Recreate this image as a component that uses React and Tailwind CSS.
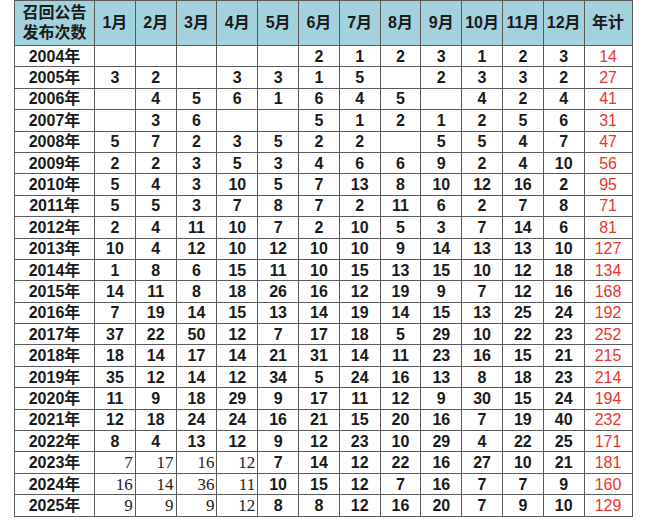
import React from 'react';

const MONTHS = ['1月', '2月', '3月', '4月', '5月', '6月', '7月', '8月', '9月', '10月', '11月', '12月'];

const ROWS = [
  ['2004年', ['', '', '', '', '', 2, 1, 2, 3, 1, 2, 3], 14],
  ['2005年', [3, 2, '', 3, 3, 1, 5, '', 2, 3, 3, 2], 27],
  ['2006年', ['', 4, 5, 6, 1, 6, 4, 5, '', 4, 2, 4], 41],
  ['2007年', ['', 3, 6, '', '', 5, 1, 2, 1, 2, 5, 6], 31],
  ['2008年', [5, 7, 2, 3, 5, 2, 2, '', 5, 5, 4, 7], 47],
  ['2009年', [2, 2, 3, 5, 3, 4, 6, 6, 9, 2, 4, 10], 56],
  ['2010年', [5, 4, 3, 10, 5, 7, 13, 8, 10, 12, 16, 2], 95],
  ['2011年', [5, 5, 3, 7, 8, 7, 2, 11, 6, 2, 7, 8], 71],
  ['2012年', [2, 4, 11, 10, 7, 2, 10, 5, 3, 7, 14, 6], 81],
  ['2013年', [10, 4, 12, 10, 12, 10, 10, 9, 14, 13, 13, 10], 127],
  ['2014年', [1, 8, 6, 15, 11, 10, 15, 13, 15, 10, 12, 18], 134],
  ['2015年', [14, 11, 8, 18, 26, 16, 12, 19, 9, 7, 12, 16], 168],
  ['2016年', [7, 19, 14, 15, 13, 14, 19, 14, 15, 13, 25, 24], 192],
  ['2017年', [37, 22, 50, 12, 7, 17, 18, 5, 29, 10, 22, 23], 252],
  ['2018年', [18, 14, 17, 14, 21, 31, 14, 11, 23, 16, 15, 21], 215],
  ['2019年', [35, 12, 14, 12, 34, 5, 24, 16, 13, 8, 18, 23], 214],
  ['2020年', [11, 9, 18, 29, 9, 17, 11, 12, 9, 30, 15, 24], 194],
  ['2021年', [12, 18, 24, 24, 16, 21, 15, 20, 16, 7, 19, 40], 232],
  ['2022年', [8, 4, 13, 12, 9, 12, 23, 10, 29, 4, 22, 25], 171],
  ['2023年', [7, 17, 16, 12, 7, 14, 12, 22, 16, 27, 10, 21], 181, true],
  ['2024年', [16, 14, 36, 11, 10, 15, 12, 7, 16, 7, 7, 9], 160, true],
  ['2025年', [9, 9, 9, 12, 8, 8, 12, 16, 20, 7, 9, 10], 129, true],
];

const sans = "font-['Liberation_Sans','Noto_Sans_CJK_SC',sans-serif]";

export default function App() {
  return (
    <div className="w-[650px] h-[532px] bg-white">
      <table className={`ml-[14px] table-fixed border-collapse w-[618px] text-[16px] font-bold text-[#1a1a1a] ${sans}`}>
        <colgroup>
          <col className="w-[80px]" />
          {MONTHS.map((m) => (
            <col key={m} className="w-[40.8px]" />
          ))}
          <col className="w-[48px]" />
        </colgroup>
        <thead>
          <tr className="h-[45px] bg-[#a2d2de]">
            <th className="border border-[#5a5a5a] leading-[20px] font-bold text-center">
              召回公告
              <br />
              发布次数
            </th>
            {MONTHS.map((m) => (
              <th key={m} className="border border-[#5a5a5a] font-bold text-center px-0 whitespace-nowrap">
                {m}
              </th>
            ))}
            <th className="border border-[#5a5a5a] font-bold text-center">年计</th>
          </tr>
        </thead>
        <tbody>
          {ROWS.map(([year, vals, total, serif]) => (
            <tr key={year} className="h-[21.4px] leading-[19px]">
              <td className="border border-[#5a5a5a] text-center p-0">{year}</td>
              {vals.map((v, i) =>
                serif && i < 4 ? (
                  <td
                    key={i}
                    className="border border-[#5a5a5a] text-right p-0 pr-[2px] text-[17px] font-normal text-[#222] font-['Liberation_Serif',serif]"
                  >
                    {v}
                  </td>
                ) : (
                  <td key={i} className="border border-[#5a5a5a] text-center p-0">
                    {v}
                  </td>
                )
              )}
              <td className="border border-[#5a5a5a] text-center p-0 font-normal text-[#e8352b]">{total}</td>
            </tr>
          ))}
        </tbody>
      </table>
    </div>
  );
}
